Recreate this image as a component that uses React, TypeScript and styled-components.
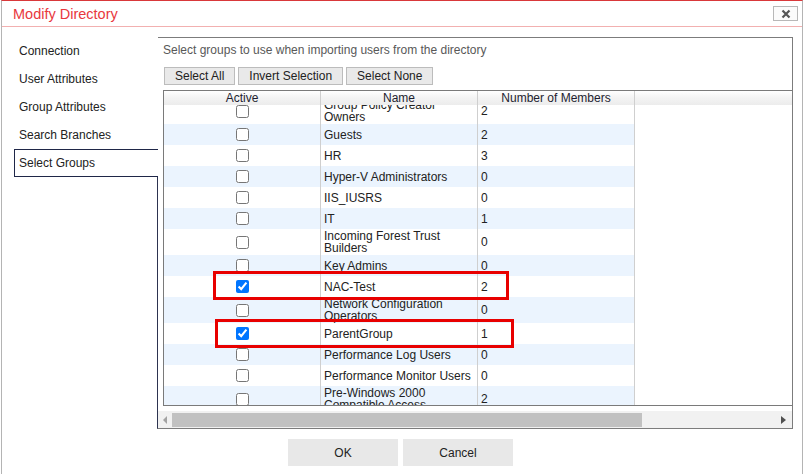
import React from "react";
import styled, { createGlobalStyle } from "styled-components";

const Global = createGlobalStyle`
  html, body { margin: 0; padding: 0; background: #ffffff; }
  body { font-family: "Liberation Sans", Arial, sans-serif; font-size: 12px; color: #222; }
  * { box-sizing: border-box; }
`;

const Dialog = styled.div`
  position: relative;
  margin-left: 1px;
  width: 802px;
  height: 474px;
  background: #fff;
  border: 1px solid #b4b4b4;
  border-top: 1px solid #d9383a;
  border-bottom: none;
`;

const TitleBar = styled.div`
  height: 26px;
  display: flex;
  align-items: center;
  justify-content: space-between;
  padding: 0 4px 0 11px;
  border-bottom: 1px solid #f2b0b0;
`;

const Title = styled.div`
  font-size: 14.5px;
  color: #e8383d;
`;

const CloseButton = styled.div`
  width: 25px;
  height: 15px;
  border: 1px solid #b8b8b8;
  background: #fbfbfb;
  display: flex;
  align-items: center;
  justify-content: center;
`;

const Body = styled.div`
  display: flex;
  align-items: flex-start;
`;

const Nav = styled.div`
  width: 155px;
  padding-top: 10px;
  flex: none;
`;

const NavItem = styled.div<{ $active?: boolean }>`
  position: relative;
  z-index: 1;
  height: 28px;
  margin-left: 12px;
  margin-right: -1px;
  padding-left: 4px;
  display: flex;
  align-items: center;
  background: #fff;
  color: #222;
  border: 1px solid ${(p) => (p.$active ? "#1f2748" : "transparent")};
  border-right: none;
`;

const Panel = styled.div`
  margin-top: 10px;
  width: 636px;
  height: 392px;
  border: 1px solid #7c7c7c;
  border-left-color: #2d3350;
  display: flex;
  flex-direction: column;
`;

const PanelContent = styled.div`
  padding: 5px 0 0 5px;
`;

const Description = styled.div`
  line-height: 14px;
  color: #585858;
`;

const ButtonRow = styled.div`
  display: flex;
  gap: 3px;
  margin-top: 10px;
  padding-left: 1px;
`;

const SmallButton = styled.div`
  height: 18px;
  padding: 0 10px;
  display: flex;
  align-items: center;
  background: #e9e9e9;
  border: 1px solid #bcbcbc;
  color: #222;
`;

const Grid = styled.div`
  margin-top: 5px;
  height: 316px;
  border: 1px solid #7a7a7a;
  border-right: none;
  display: flex;
  flex-direction: column;
  overflow: hidden;
`;

const HeaderRow = styled.div`
  position: relative;
  z-index: 1;
  height: 14px;
  flex: none;
  display: grid;
  grid-template-columns: 157px 157px 157px 1fr;
  background: linear-gradient(#ffffff 0%, #f4f4f4 45%, #ececec 100%);
`;

const HeaderCell = styled.div<{ $last?: boolean }>`
  text-align: center;
  line-height: 13px;
  padding-top: 1px;
  color: #1e1e30;
  border-right: ${(p) => (p.$last ? "none" : "1px solid #cfcfcf")};
  white-space: nowrap;
`;

const BodyViewport = styled.div`
  flex: 1;
  overflow: hidden;
`;

const RowList = styled.div`
  margin-top: -7px;
`;

const Row = styled.div<{ $alt: boolean; $tall: boolean }>`
  display: grid;
  grid-template-columns: 157px 157px 157px;
  width: 471px;
  height: ${(p) => (p.$tall ? 26 : 21)}px;
  background: ${(p) => (p.$alt ? "#ebf4fe" : "#ffffff")};
`;

const Cell = styled.div<{ $center?: boolean }>`
  display: flex;
  align-items: center;
  justify-content: ${(p) => (p.$center ? "center" : "flex-start")};
  padding-left: ${(p) => (p.$center ? 0 : 3)}px;
  border-right: 1px solid #cfcfcf;
  line-height: 12px;
  overflow: hidden;
  color: #222;
`;

const Check = styled.input`
  margin: 0;
  width: 13px;
  height: 13px;
  accent-color: #0075ff;
`;

const ScrollArea = styled.div`
  margin-top: 5px;
  height: 17px;
  background: #f1f1f1;
  display: flex;
  align-items: center;
`;

const ArrowBtn = styled.div<{ $w: number }>`
  width: ${(p) => p.$w}px;
  height: 17px;
  flex: none;
  display: flex;
  align-items: center;
  justify-content: center;
`;

const Track = styled.div`
  flex: 1;
  height: 17px;
  display: flex;
  align-items: center;
`;

const Thumb = styled.div`
  width: 470px;
  height: 14px;
  background: #c1c1c1;
`;

const Footer = styled.div`
  display: flex;
  justify-content: center;
  gap: 5px;
  margin-top: 10px;
  padding-right: 3px;
`;

const FooterButton = styled.div`
  width: 110px;
  height: 27px;
  background: #e8e8e8;
  display: flex;
  align-items: center;
  justify-content: center;
  color: #222;
`;

const Highlight = styled.div<{ $l: number; $t: number; $w: number }>`
  position: absolute;
  left: ${(p) => p.$l}px;
  top: ${(p) => p.$t}px;
  width: ${(p) => p.$w}px;
  height: 29px;
  border: 3px solid #e80000;
  pointer-events: none;
`;

type Group = { name: string; n: number; tall?: boolean; checked?: boolean };

const groups: Group[] = [
  { name: "Group Policy Creator Owners", n: 2, tall: true },
  { name: "Guests", n: 2 },
  { name: "HR", n: 3 },
  { name: "Hyper-V Administrators", n: 0 },
  { name: "IIS_IUSRS", n: 0 },
  { name: "IT", n: 1 },
  { name: "Incoming Forest Trust Builders", n: 0, tall: true },
  { name: "Key Admins", n: 0 },
  { name: "NAC-Test", n: 2, checked: true },
  { name: "Network Configuration Operators", n: 0, tall: true },
  { name: "ParentGroup", n: 1, checked: true },
  { name: "Performance Log Users", n: 0 },
  { name: "Performance Monitor Users", n: 0 },
  { name: "Pre-Windows 2000 Compatible Access", n: 2, tall: true },
];

const navItems = ["Connection", "User Attributes", "Group Attributes", "Search Branches", "Select Groups"];

export default function App() {
  return (
    <>
      <Global />
      <Dialog>
        <TitleBar>
          <Title>Modify Directory</Title>
          <CloseButton>
            <svg width="10" height="10" viewBox="0 0 10 10">
              <path d="M1.5 1.5 L8.5 8.5 M8.5 1.5 L1.5 8.5" stroke="#555" strokeWidth="2.2" />
            </svg>
          </CloseButton>
        </TitleBar>
        <Body>
          <Nav>
            {navItems.map((n) => (
              <NavItem key={n} $active={n === "Select Groups"}>
                {n}
              </NavItem>
            ))}
          </Nav>
          <Panel>
            <PanelContent>
              <Description>Select groups to use when importing users from the directory</Description>
              <ButtonRow>
                <SmallButton>Select All</SmallButton>
                <SmallButton>Invert Selection</SmallButton>
                <SmallButton>Select None</SmallButton>
              </ButtonRow>
              <Grid>
                <HeaderRow>
                  <HeaderCell>Active</HeaderCell>
                  <HeaderCell>Name</HeaderCell>
                  <HeaderCell>Number of Members</HeaderCell>
                  <HeaderCell $last />
                </HeaderRow>
                <BodyViewport>
                  <RowList>
                    {groups.map((g, i) => (
                      <Row key={g.name} $alt={i % 2 === 1} $tall={!!g.tall}>
                        <Cell $center>
                          <Check type="checkbox" defaultChecked={!!g.checked} />
                        </Cell>
                        <Cell>{g.name}</Cell>
                        <Cell>{g.n}</Cell>
                      </Row>
                    ))}
                  </RowList>
                </BodyViewport>
              </Grid>
            </PanelContent>
            <ScrollArea>
              <ArrowBtn $w={14}>
                <svg width="5" height="8" viewBox="0 0 5 8">
                  <polygon points="4,0 4,8 0,4" fill="#a3a3a3" />
                </svg>
              </ArrowBtn>
              <Track>
                <Thumb />
              </Track>
              <ArrowBtn $w={17}>
                <svg width="5" height="8" viewBox="0 0 5 8">
                  <polygon points="0,0 0,8 5,4" fill="#505050" />
                </svg>
              </ArrowBtn>
            </ScrollArea>
          </Panel>
        </Body>
        <Footer>
          <FooterButton>OK</FooterButton>
          <FooterButton>Cancel</FooterButton>
        </Footer>
        <Highlight $l={211} $t={270} $w={296} />
        <Highlight $l={213} $t={318} $w={299} />
      </Dialog>
    </>
  );
}
